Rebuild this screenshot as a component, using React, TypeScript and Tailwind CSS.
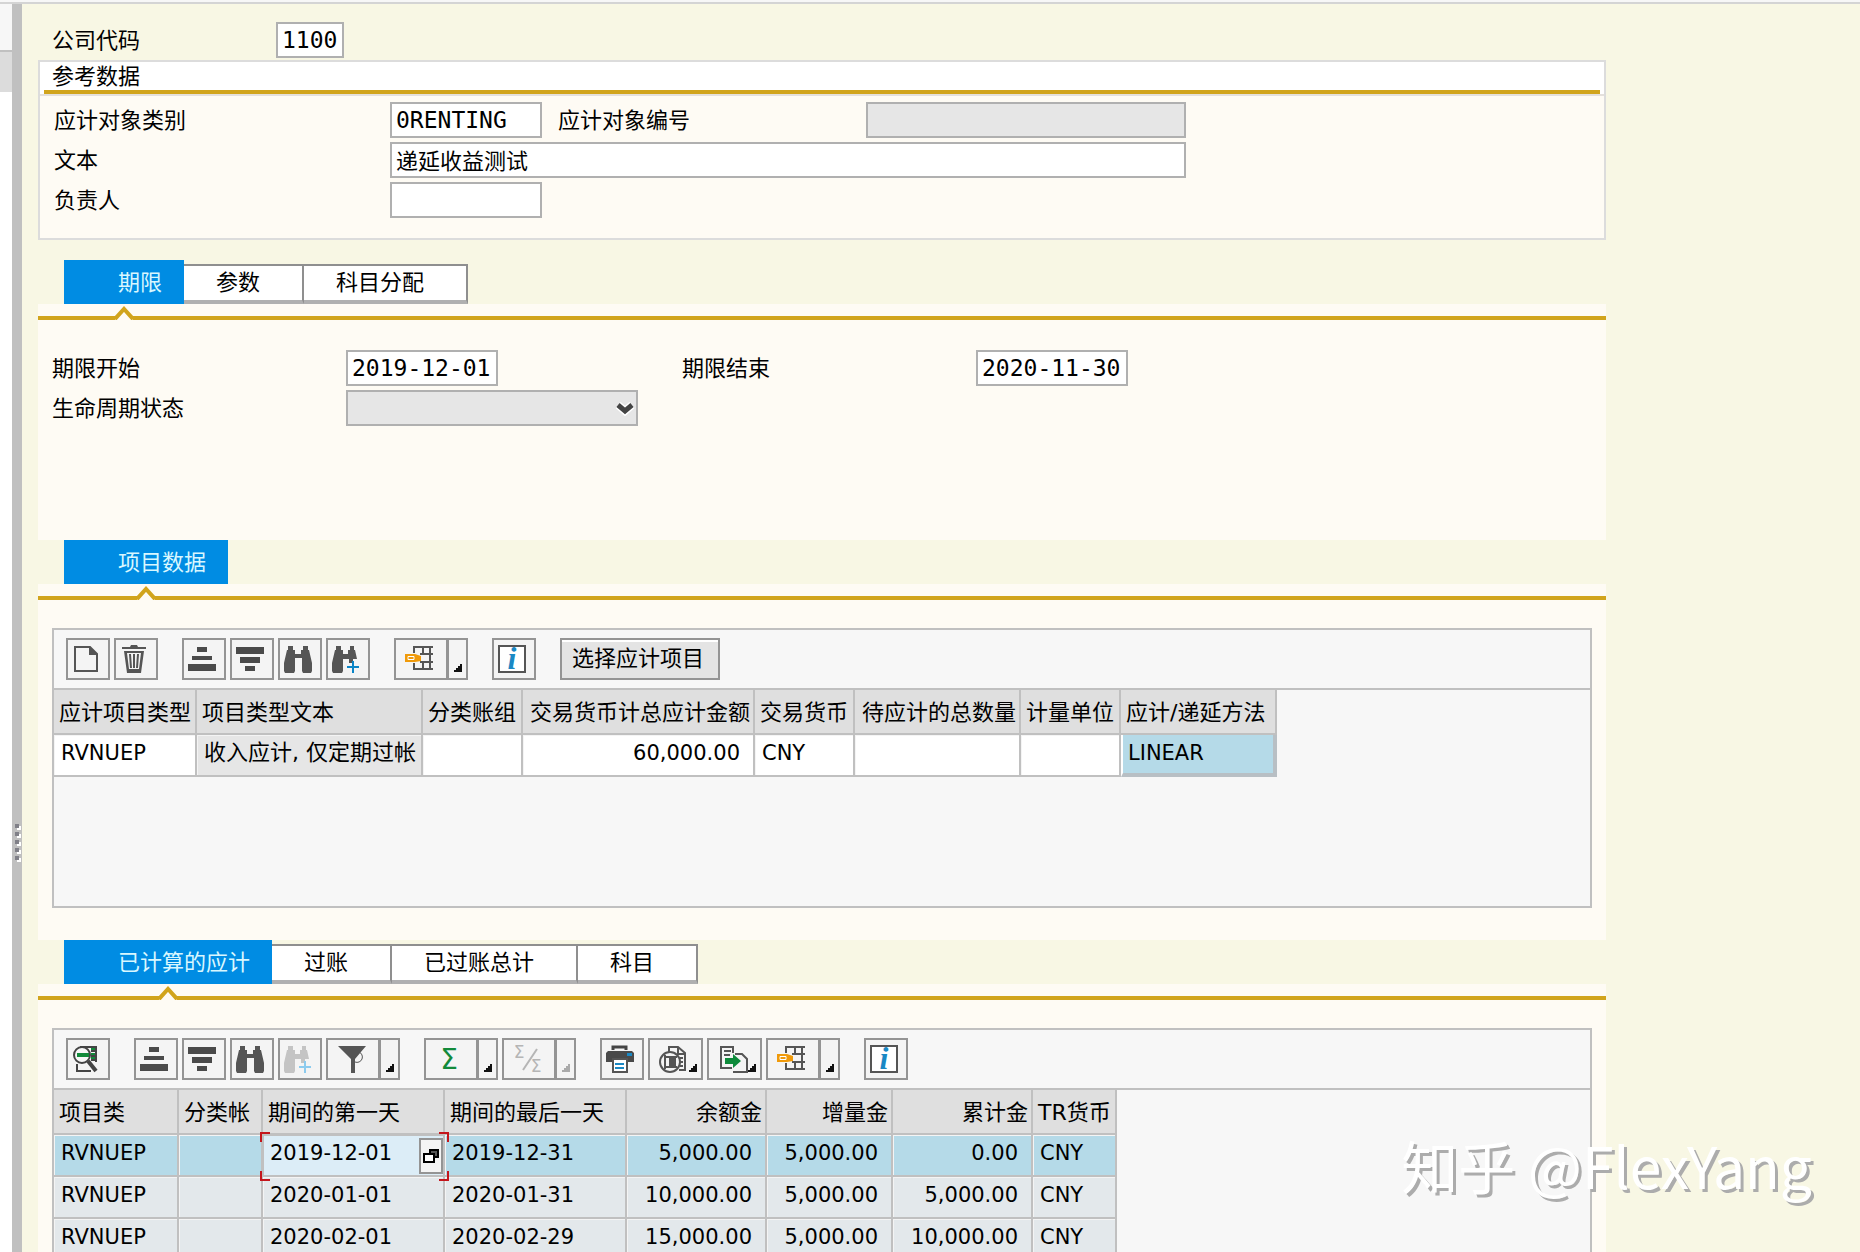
import type { ReactNode } from 'react';
import clsx from 'clsx';

const FONT = "font-['DejaVu_Sans','Noto_Sans_CJK_SC',sans-serif]";
const MONO = "font-['DejaVu_Sans_Mono','Noto_Sans_CJK_SC',monospace]";

/* ---------- icons ---------- */

function Icon({ children, className = '' }: { children: ReactNode; className?: string }) {
  return (
    <svg viewBox="0 0 28 28" className={clsx('size-7 shrink-0 overflow-visible', className)} fill="none">
      {children}
    </svg>
  );
}

const CreateIcon = () => (
  <Icon>
    <path d="M1 2h15l7 7v17H1z" stroke="#555" strokeWidth="2" />
    <path d="M15 1l9 9h-9z" fill="#555" />
  </Icon>
);

const TrashIcon = () => (
  <Icon>
    <path d="M0 2h8l1-2h6l1 2h8v2H0zM2 6h20l-3 22H5zM5 8l2 16h10l2-16z" fill="#555" fillRule="evenodd" />
    <path d="M8 9l1 14M12 9v14M16 9l-1 14" stroke="#555" strokeWidth="2" />
  </Icon>
);

const SortUpIcon = () => (
  <Icon>
    <path d="M7 2h10v5H7zM2 11h20v4H2zM-2 19h28v7H-2z" fill="#4a4a4a" />
  </Icon>
);

const SortDownIcon = () => (
  <Icon>
    <path d="M-2 2h28v7H-2zM2 12h20v6H2zM7 21h10v5H7z" fill="#4a4a4a" />
  </Icon>
);

const FindIcon = () => (
  <Icon>
    <path
      d="M2 1h5v4h2v4h6V5h2V1h5v4h1l3 13v8l-1 2h-8l-1-2V13H9v13l-1 2H-1l-1-2v-8L1 5h1z"
      fill="#555"
    />
  </Icon>
);

const FindNextIcon = ({ dim = false }: { dim?: boolean }) => (
  <Icon>
    <path
      d="M2 1h5v4h2v4h5V5h2V1h4v4h1l2 9h-4v4h-4v-4H9v12l-1 2H-1l-1-2v-8L1 5h1z"
      fill={dim ? '#c4c4c4' : '#555'}
    />
    <path d="M19 16v12M13 22h12" stroke={dim ? '#8ccbee' : '#0a84c6'} strokeWidth="2" />
  </Icon>
);

const LayoutIcon = () => (
  <Icon>
    <path d="M7 8V2h19M7 18v6h19M16 2v6M16 17v7M23 2v22M13 9h13M13 17h13" stroke="#555" strokeWidth="2" />
    <path d="M-2 9H8l6 2v5l-6 1H-2z" fill="#f09a0a" />
    <path d="M1 11.5h6v3H1z" stroke="#fff" />
  </Icon>
);

const InfoIcon = () => (
  <Icon>
    <path d="M-1 1h26v26H-1z" fill="#fff" stroke="#555" strokeWidth="2" />
    <text x="12" y="24" textAnchor="middle" fontFamily="Liberation Serif" fontSize="32" fontStyle="italic" fontWeight="700" fill="#1a88c4">
      i
    </text>
  </Icon>
);

const DetailIcon = () => (
  <Icon>
    <path d="M3 19v7h14M6 2h16v15M17 6h5M17 11h5M17 15h5" stroke="#444" strokeWidth="2" />
    <path d="M14 16l8 10" stroke="#444" strokeWidth="4" />
    <circle cx="8" cy="10" r="8" fill="#f7f7f7" stroke="#444" strokeWidth="2" />
    <path d="M3 8h12v4H3zM17 3h4v2h-4zM17 8h4v2h-4zM17 12h4v2h-4z" fill="#128a3a" />
  </Icon>
);

const FilterIcon = () => (
  <Icon>
    <path d="M-1 1h28L16 14v14h-4V14z" fill="#555" />
    <path d="M20 7a5 5 0 1 1-4 10" stroke="#555" />
  </Icon>
);

const SumIcon = () => (
  <Icon>
    <text x="12" y="24" textAnchor="middle" fontFamily="DejaVu Sans" fontSize="28" fill="#128a3a">
      Σ
    </text>
  </Icon>
);

const SubtotalIcon = () => (
  <Icon>
    <path d="M22 4L8 25" stroke="#b5b5b5" strokeWidth="2" />
    <text x="4" y="13" textAnchor="middle" fontFamily="DejaVu Sans" fontSize="17" fill="#b5b5b5">
      Σ
    </text>
    <text x="21" y="27" textAnchor="middle" fontFamily="DejaVu Sans" fontSize="17" fill="#b5b5b5">
      Σ
    </text>
  </Icon>
);

const PrintIcon = () => (
  <Icon>
    <path d="M5 5V2h13v3" stroke="#444" strokeWidth="3" />
    <path d="M0 6h24l2 2v9H-2V8z" fill="#4a4a4a" />
    <path d="M19 8h5v3h-5z" fill="#1a88c4" />
    <path d="M5 14h14v13H5z" fill="#fff" stroke="#555" strokeWidth="2" />
    <path d="M7 19h9M7 23h9" stroke="#1a88c4" strokeWidth="2" />
  </Icon>
);

const ViewIcon = () => (
  <Icon>
    <path d="M9 7V2h9l7 6v17h-6M18 2v7h7M20 13h3M20 17h3M20 21h3" stroke="#555" strokeWidth="2" />
    <circle cx="10" cy="17" r="10" fill="#f4f4f4" stroke="#555" strokeWidth="2" />
    <path d="M5 10v14M5 12h12M5 22h12" stroke="#555" strokeWidth="2" />
    <path d="M9 13h7v8H9z" fill="#555" />
  </Icon>
);

const ExportIcon = () => (
  <Icon>
    <path d="M13 23H2V2h12v6M5 6h7M5 10h6M16 9h7l5 5v13H14" stroke="#555" strokeWidth="2" />
    <path d="M6 13h8V9l8 7-8 7v-4H6z" fill="#0d8a3a" />
  </Icon>
);

const Corner = ({ dim = false }: { dim?: boolean }) => (
  <svg viewBox="0 0 8 8" className="size-2 shrink-0" fill={dim ? '#aaa' : '#111'}>
    <path d="M6 0h2v8H0V6h2V4h2V2h2z" />
  </svg>
);

/* ---------- controls ---------- */

const BTN = 'flex h-[42px] items-center justify-center border-2 border-[#949494] bg-[#f4f4f4]';

function ToolButton({ label, children }: { label: string; children: ReactNode }) {
  return (
    <button aria-label={label} className={clsx(BTN, 'w-11 pr-px')}>
      {children}
    </button>
  );
}

// menu only: the corner mark sits inside the same button
function MenuButton({ label, children }: { label: string; children: ReactNode }) {
  return (
    <button
      aria-label={label}
      className="flex h-[42px] w-[55px] items-center justify-between border-2 border-[#949494] bg-[#f4f4f4] pr-1 pl-2.5"
    >
      {children}
      <span className="flex h-full items-end pb-1.5">
        <Corner />
      </span>
    </button>
  );
}

function SplitButton({ label, dim = false, children }: { label: string; dim?: boolean; children: ReactNode }) {
  return (
    <div className="flex">
      <button aria-label={label} disabled={dim} className={clsx(BTN, 'w-[54px]')}>
        {children}
      </button>
      <button aria-label={`${label} 菜单`} disabled={dim} className={clsx(BTN, 'w-5 items-end border-l pb-1.5')}>
        <Corner dim={dim} />
      </button>
    </div>
  );
}

interface FieldProps {
  id: string;
  value?: string;
  className: string;
  disabled?: boolean;
}

function Field({ id, value = '', className, disabled }: FieldProps) {
  return (
    <input
      id={id}
      defaultValue={value}
      disabled={disabled}
      className={clsx(
        MONO,
        'h-9 border-2 border-[#b0b0b0] px-1 leading-8 text-black outline-none',
        disabled ? 'bg-[#e6e6e6]' : 'bg-white',
        className,
      )}
    />
  );
}

function Tabs({ active, activeWidth, others = [] }: { active: string; activeWidth: string; others?: { label: string; width: string }[] }) {
  return (
    <div className="pl-[26px]" role="tablist">
      <div className="flex h-11 items-end">
        <button role="tab" aria-selected="true" className={clsx('relative h-11 bg-[#008ce3] pt-0.5 pl-[54px] text-left text-[#d8f7ff]', activeWidth)}>
          {active}
          <svg viewBox="0 0 20 14" className="absolute -bottom-4 left-1/2 z-10 h-3.5 w-5 -translate-x-1/2" fill="none">
            <path d="M1 14L10 3l9 11z" fill="#fefbf4" />
            <path d="M1 13L10 3l9 10" stroke="#d1a41c" strokeWidth="4" />
          </svg>
        </button>
        {others.map((t) => (
          <button
            key={t.label}
            role="tab"
            aria-selected="false"
            className={clsx('h-10 border-t-2 border-r-2 border-b-4 border-[#8f8f8f] border-b-[#b0b0b0] bg-white pl-8 text-left', t.width)}
          >
            {t.label}
          </button>
        ))}
      </div>
    </div>
  );
}

function Panel({ children, className }: { children: ReactNode; className: string }) {
  return (
    <div className={clsx('bg-[#fefbf4] pt-3', className)}>
      <div className="h-1 bg-[#d1a41c]" />
      {children}
    </div>
  );
}

const HEAD = 'h-[45px] border-r-2 border-b-2 border-[#c0c0c0] bg-[#dfdfdf] pt-0.5 pr-[3px] pl-[5px] font-normal whitespace-nowrap';
const CELL = 'h-[42px] border-r-2 border-b-2 border-[#c0c0c0] pb-1 text-[21px] whitespace-nowrap shadow-[inset_1px_1px_0_#f4f4f4]';
const LABEL = 'pt-0.5';

/* ---------- data ---------- */

const itemColumns = [
  { label: '应计项目类型', width: 'w-[143px]' },
  { label: '项目类型文本', width: 'w-[226px]' },
  { label: '分类账组', width: 'w-[100px]' },
  { label: '交易货币计总应计金额', width: 'w-[232px]', right: true },
  { label: '交易货币', width: 'w-[100px]' },
  { label: '待应计的总数量', width: 'w-[166px]', right: true },
  { label: '计量单位', width: 'w-[100px]' },
  { label: '应计/递延方法', width: 'w-[156px]' },
];

const accrualColumns = [
  { label: '项目类', width: 'w-[125px]' },
  { label: '分类帐', width: 'w-[84px]' },
  { label: '期间的第一天', width: 'w-[182px]' },
  { label: '期间的最后一天', width: 'w-[182px]' },
  { label: '余额金', width: 'w-[140px]', right: true },
  { label: '增量金', width: 'w-[126px]', right: true },
  { label: '累计金', width: 'w-[140px]', right: true },
  { label: 'TR货币', width: 'w-[84px]' },
];

const accruals = [
  ['RVNUEP', '', '2019-12-01', '2019-12-31', '5,000.00', '5,000.00', '0.00', 'CNY'],
  ['RVNUEP', '', '2020-01-01', '2020-01-31', '10,000.00', '5,000.00', '5,000.00', 'CNY'],
  ['RVNUEP', '', '2020-02-01', '2020-02-29', '15,000.00', '5,000.00', '10,000.00', 'CNY'],
];

function HeadRow({ columns }: { columns: { label: string; width: string; right?: boolean }[] }) {
  return (
    <thead>
      <tr>
        {columns.map((c) => (
          <th key={c.label} scope="col" className={clsx(HEAD, c.width, c.right ? 'text-right' : 'text-left')}>
            {c.label}
          </th>
        ))}
      </tr>
    </thead>
  );
}

function FocusCell({ value }: { value: string }) {
  return (
    <div className="relative flex h-10 items-start justify-between border-t border-l border-[#c0c0c0] bg-[#dcedf7]">
      <span className="pl-1.5 leading-[34px]">{value}</span>
      <button aria-label="值帮助" className="mt-0.5 flex h-9 w-6 items-center justify-center border-2 border-[#949494] bg-[#f4f4f4]">
        <svg viewBox="0 0 16 16" className="size-4" fill="#fff" stroke="#000" strokeWidth="2">
          <path d="M7 2h8v7H7z" fill="#555" />
          <path d="M1 6h10v8H1z" />
        </svg>
      </button>
      <i className="absolute -top-1 -left-1 size-2.5 border-t-2 border-l-2 border-[#c4161c]" />
      <i className="absolute -top-1 -right-1.5 size-2.5 border-t-2 border-r-2 border-[#c4161c]" />
      <i className="absolute -bottom-1.5 -left-1 size-2.5 border-b-2 border-l-2 border-[#c4161c]" />
      <i className="absolute -right-1.5 -bottom-1.5 size-2.5 border-r-2 border-b-2 border-[#c4161c]" />
    </div>
  );
}

/* ---------- page ---------- */

function ReferenceData() {
  return (
    <fieldset className="border-2 border-[#dcdcdc] bg-[#fefbf4] pb-5">
      <div className="border-b-2 border-[#e4e0dc] bg-white px-1">
        <h2 className="box-content h-7 border-b-4 border-[#d1a41c] px-2 leading-[30px]">参考数据</h2>
      </div>
      <div className="flex flex-col gap-1 pt-1.5 pl-3.5">
        <div className="flex items-center">
          <label htmlFor="objCategory" className={clsx(LABEL, 'w-[336px]')}>应计对象类别</label>
          <Field id="objCategory" value="0RENTING" className="w-[152px] text-[23px]" />
          <label htmlFor="objNumber" className={clsx(LABEL, 'w-[324px] pl-4')}>应计对象编号</label>
          <Field id="objNumber" disabled className="w-80" />
        </div>
        <div className="flex items-center">
          <label htmlFor="text" className={clsx(LABEL, 'w-[336px]')}>文本</label>
          <Field id="text" value="递延收益测试" className="w-[796px] pb-0.5 text-[22px]" />
        </div>
        <div className="flex items-center">
          <label htmlFor="owner" className={clsx(LABEL, 'w-[336px]')}>负责人</label>
          <Field id="owner" className="w-[152px]" />
        </div>
      </div>
    </fieldset>
  );
}

function TermFields() {
  return (
    <div className="flex flex-col gap-1 pt-[30px] pl-3.5">
      <div className="flex items-center">
        <label htmlFor="start" className={clsx(LABEL, 'w-[294px]')}>期限开始</label>
        <Field id="start" value="2019-12-01" className="w-[152px] text-[23px]" />
        <label htmlFor="end" className={clsx(LABEL, 'ml-46 w-[294px]')}>期限结束</label>
        <Field id="end" value="2020-11-30" className="w-[152px] text-[23px]" />
      </div>
      <div className="flex items-center">
        <label htmlFor="status" className={clsx(LABEL, 'w-[294px]')}>生命周期状态</label>
        <div className="relative flex">
          <select id="status" disabled className="h-9 w-[292px] appearance-none border-2 border-[#b0b0b0] bg-[#e6e6e6]">
            <option value=""></option>
          </select>
          <svg viewBox="0 0 18 14" className="pointer-events-none absolute top-3 right-1 h-3.5 w-[18px]" fill="none">
            <path d="M2 3l7 6 7-6" stroke="#fff" strokeWidth="8" />
            <path d="M2 3l7 6 7-6" stroke="#444" strokeWidth="5" />
          </svg>
        </div>
      </div>
    </div>
  );
}

function ItemGrid() {
  return (
    <section className="h-[280px] border-2 border-[#c0c0c0] bg-[#f7f7f7]">
      <div className="flex items-center gap-6 border-b-2 border-[#c0c0c0] px-3 py-2">
        <div className="flex gap-1">
          <ToolButton label="创建"><CreateIcon /></ToolButton>
          <ToolButton label="删除"><TrashIcon /></ToolButton>
        </div>
        <div className="flex gap-1">
          <ToolButton label="升序"><SortUpIcon /></ToolButton>
          <ToolButton label="降序"><SortDownIcon /></ToolButton>
          <ToolButton label="查找"><FindIcon /></ToolButton>
          <ToolButton label="查找下一个"><FindNextIcon /></ToolButton>
        </div>
        <SplitButton label="布局"><LayoutIcon /></SplitButton>
        <ToolButton label="信息"><InfoIcon /></ToolButton>
        <button className="h-[42px] w-40 border-2 border-[#949494] bg-[#e4e4e4] pr-1 shadow-[inset_0_2px_0_#fff]">选择应计项目</button>
      </div>
      <table className="table-fixed border-separate border-spacing-0">
        <HeadRow columns={itemColumns} />
        <tbody>
          <tr>
            <td className={clsx(CELL, 'bg-white pl-[7px]')}>RVNUEP</td>
            <td className={clsx(CELL, 'bg-[#e6e6e6] pl-[7px]')}>
              <span className="text-[22px]">收入应计, 仅定期过帐</span>
            </td>
            <td className={clsx(CELL, 'bg-white')} />
            <td className={clsx(CELL, 'bg-white pr-[13px] text-right')}>60,000.00</td>
            <td className={clsx(CELL, 'bg-white pl-[7px]')}>CNY</td>
            <td className={clsx(CELL, 'bg-white')} />
            <td className={clsx(CELL, 'bg-white')} />
            <td className="border-r-4 border-b-4 border-l-2 border-[#b8bfc4] border-l-white bg-[#b5dae8] pb-0.5 pl-[5px] text-[21px]">LINEAR</td>
          </tr>
        </tbody>
      </table>
    </section>
  );
}

function AccrualGrid() {
  return (
    <section className="min-h-[280px] border-2 border-[#c0c0c0] bg-[#f7f7f7]">
      <div className="flex items-center gap-6 border-b-2 border-[#c0c0c0] px-3 py-2">
        <ToolButton label="明细"><DetailIcon /></ToolButton>
        <div className="flex gap-1">
          <ToolButton label="升序"><SortUpIcon /></ToolButton>
          <ToolButton label="降序"><SortDownIcon /></ToolButton>
          <ToolButton label="查找"><FindIcon /></ToolButton>
          <ToolButton label="查找下一个"><FindNextIcon dim /></ToolButton>
          <SplitButton label="过滤"><FilterIcon /></SplitButton>
        </div>
        <div className="flex gap-1">
          <SplitButton label="总计"><SumIcon /></SplitButton>
          <SplitButton label="小计" dim><SubtotalIcon /></SplitButton>
        </div>
        <div className="flex gap-1">
          <ToolButton label="打印"><PrintIcon /></ToolButton>
          <MenuButton label="视图"><ViewIcon /></MenuButton>
          <MenuButton label="导出"><ExportIcon /></MenuButton>
          <SplitButton label="布局"><LayoutIcon /></SplitButton>
        </div>
        <ToolButton label="信息"><InfoIcon /></ToolButton>
      </div>
      <table className="table-fixed border-separate border-spacing-0">
        <HeadRow columns={accrualColumns} />
        <tbody>
          {accruals.map((row, r) => (
            <tr key={row[2]} className={r === 0 ? 'bg-[#b5dae8]' : 'bg-[#e3e8eb]'}>
              {row.map((value, c) =>
                r === 0 && c === 2 ? (
                  <td key={c} className="border-r-2 border-b-2 border-[#c0c0c0] p-0 text-[21px]">
                    <FocusCell value={value} />
                  </td>
                ) : (
                  <td key={c} className={clsx(CELL, accrualColumns[c].right ? 'pr-[13px] text-right' : 'pl-[7px]')}>
                    {value}
                  </td>
                ),
              )}
            </tr>
          ))}
        </tbody>
      </table>
    </section>
  );
}

export default function App() {
  return (
    <div className={clsx(FONT, 'relative flex h-screen flex-col overflow-hidden bg-[#f8f7e4] text-[22px] leading-8 text-black')}>
      <div className="h-1 shrink-0 border-b-2 border-[#d4d4d4] bg-[#f7f7f7]" />
      <div className="flex min-h-0 flex-1">
        <aside className="flex w-3 shrink-0 flex-col bg-white">
          <div className="h-12 border-b-2 border-[#c0c0c0] bg-[#f7f7f7]" />
          <div className="h-10 bg-[#dcdcdc]" />
        </aside>
        <div className="flex w-2.5 shrink-0 flex-col items-center justify-center gap-1 bg-[#c0c0c0] pt-[428px]">
          {[0, 1, 2, 3, 4].map((n) => (
            <i key={n} className="size-1 bg-[#808088] shadow-[2px_2px_0_#fff]" />
          ))}
        </div>
        <main className="min-w-0 flex-1 pt-3.5 pl-4">
          <div className="flex w-full max-w-[1568px] flex-col">
            <div className="mb-0.5 flex items-center pt-1 pl-3.5">
              <label htmlFor="company" className={clsx(LABEL, 'w-56')}>公司代码</label>
              <Field id="company" value="1100" className="w-[68px] text-[23px]" />
            </div>
            <ReferenceData />

            <div className="pt-5">
              <Tabs
                active="期限"
                activeWidth="w-[120px]"
                others={[
                  { label: '参数', width: 'w-[120px]' },
                  { label: '科目分配', width: 'w-[164px]' },
                ]}
              />
            </div>
            <Panel className="h-[236px]">
              <TermFields />
            </Panel>

            <Tabs active="项目数据" activeWidth="w-[164px]" />
            <Panel className="h-[356px]">
              <div className="px-3.5 pt-7">
                <ItemGrid />
              </div>
            </Panel>

            <Tabs
              active="已计算的应计"
              activeWidth="w-[208px]"
              others={[
                { label: '过账', width: 'w-[120px]' },
                { label: '已过账总计', width: 'w-[186px]' },
                { label: '科目', width: 'w-[120px]' },
              ]}
            />
            <Panel className="pb-8">
              <div className="px-3.5 pt-7">
                <AccrualGrid />
              </div>
            </Panel>
          </div>
        </main>
      </div>
      <div className="absolute right-12 bottom-12 font-['Noto_Sans_CJK_SC',sans-serif] text-[57px] leading-20 whitespace-nowrap text-white [text-shadow:3px_3px_0_#acacac]">
        知乎 @FlexYang
      </div>
    </div>
  );
}
